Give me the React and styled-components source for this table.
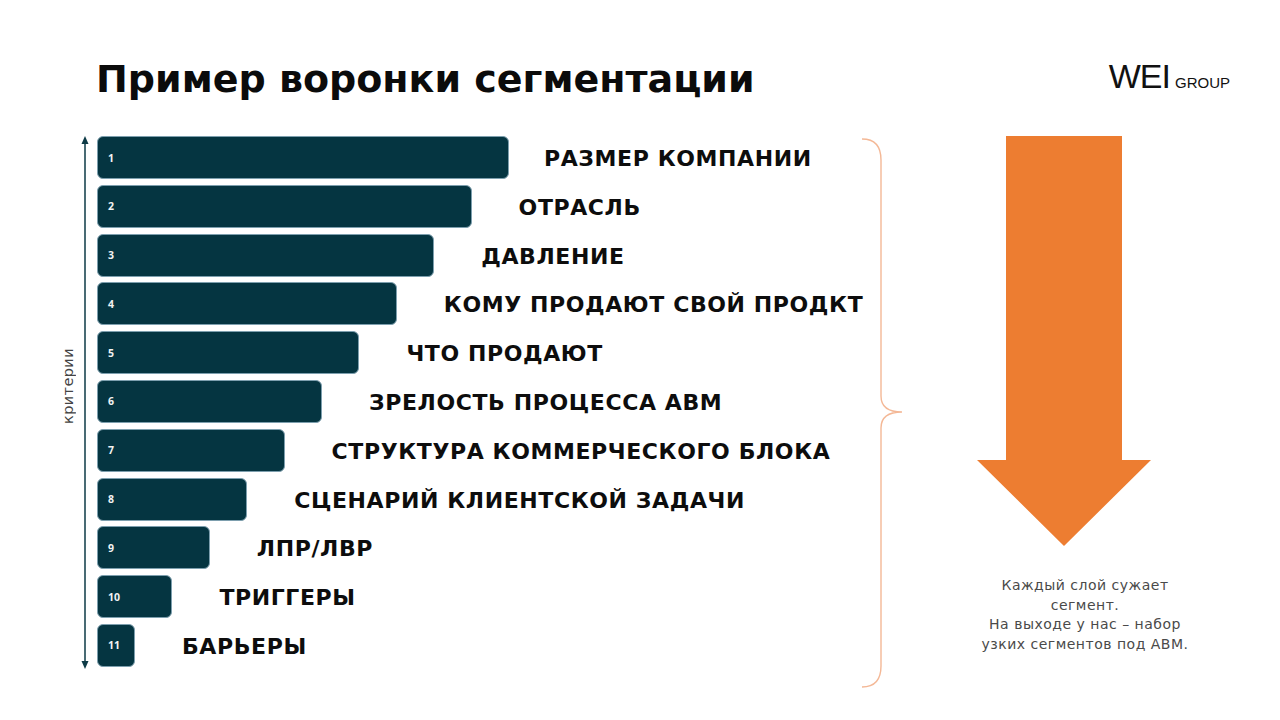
import React from "react";
import styled, { createGlobalStyle } from "styled-components";

const Global = createGlobalStyle`
  html, body { margin: 0; padding: 0; background: #fff; }
  body { font-family: "DejaVu Sans", "Open Sans", sans-serif; }
`;

const Page = styled.div`
  width: 1280px;
  height: 720px;
  background: #fff;
  overflow: hidden;
  box-sizing: border-box;
`;

const Header = styled.header`
  display: flex;
  justify-content: space-between;
  align-items: flex-start;
  padding: 55px 50px 0 96px;
  height: 136px;
  box-sizing: border-box;
`;

const Title = styled.h1`
  margin: 0;
  font-family: "DejaVu Sans", sans-serif;
  font-weight: 700;
  font-size: 38px;
  line-height: 48px;
  color: #0b0b0b;
`;

const Logo = styled.div`
  display: flex;
  align-items: baseline;
  gap: 5px;
  margin-top: 2px;
  font-family: "Liberation Sans", Arial, sans-serif;
  color: #111;
`;

const LogoMain = styled.span`
  font-size: 34px;
  letter-spacing: -1px;
`;

const LogoSub = styled.span`
  font-size: 15px;
`;

const Body = styled.main`
  display: flex;
  align-items: flex-start;
  padding-left: 60px;
`;

const AxisCol = styled.div`
  display: flex;
  align-items: center;
  gap: 4px;
  height: 533px;
  margin-right: 7px;
`;

const AxisLabel = styled.span`
  writing-mode: vertical-rl;
  transform: rotate(180deg);
  font-family: "DejaVu Sans", sans-serif;
  font-size: 14.5px;
  letter-spacing: 0.4px;
  color: #444;
  width: 16px;
  margin-top: -32px;
`;

const BarsArea = styled.div`
  width: 763px;
  display: flex;
  flex-direction: column;
  gap: 5.8px;
`;

const Row = styled.div`
  display: flex;
  align-items: center;
  height: 43px;
`;

const Bar = styled.div`
  height: 43px;
  box-sizing: border-box;
  background: #053541;
  border: 1px solid #7d9fae;
  border-radius: 6px;
  display: flex;
  align-items: center;
  padding-left: 10px;
  flex-shrink: 0;
  font-family: "Open Sans", sans-serif;
  font-weight: 700;
  font-size: 10.5px;
  color: #f2f2f2;
`;

const Label = styled.span`
  font-family: "DejaVu Sans", sans-serif;
  font-weight: 700;
  font-size: 22px;
  letter-spacing: 0.6px;
  color: #0d0d0d;
  white-space: nowrap;
  margin-left: ${(p) => p.$offset}px;
  margin-top: 2px;
`;

const Brace = styled.svg`
  margin-top: 2px;
  flex-shrink: 0;
`;

const ArrowCol = styled.div`
  display: flex;
  flex-direction: column;
  align-items: flex-start;
  margin-left: 73px;
`;

const Note = styled.p`
  margin: 30px 0 0;
  width: 216px;
  text-align: center;
  font-family: "DejaVu Sans", sans-serif;
  font-size: 14px;
  letter-spacing: 0.5px;
  line-height: 19.5px;
  color: #4a4a4a;
  white-space: nowrap;
`;

const items = [
  "РАЗМЕР КОМПАНИИ",
  "ОТРАСЛЬ",
  "ДАВЛЕНИЕ",
  "КОМУ ПРОДАЮТ СВОЙ ПРОДКТ",
  "ЧТО ПРОДАЮТ",
  "ЗРЕЛОСТЬ ПРОЦЕССА ABM",
  "СТРУКТУРА КОММЕРЧЕСКОГО БЛОКА",
  "СЦЕНАРИЙ КЛИЕНТСКОЙ ЗАДАЧИ",
  "ЛПР/ЛВР",
  "ТРИГГЕРЫ",
  "БАРЬЕРЫ",
];

export default function App() {
  return (
    <Page>
      <Global />
      <Header>
        <Title>Пример воронки сегментации</Title>
        <Logo>
          <LogoMain>WEI</LogoMain>
          <LogoSub>GROUP</LogoSub>
        </Logo>
      </Header>
      <Body>
        <AxisCol>
          <AxisLabel>критерии</AxisLabel>
          <svg width="10" height="533" viewBox="0 0 10 533">
            <line x1="5" y1="4" x2="5" y2="529" stroke="#0d3a46" strokeWidth="1.5" />
            <polygon points="5,0 1.5,8 8.5,8" fill="#0d3a46" />
            <polygon points="5,533 1.5,525 8.5,525" fill="#0d3a46" />
          </svg>
        </AxisCol>
        <BarsArea>
          {items.map((t, i) => (
            <Row key={t}>
              <Bar style={{ width: `${412 - i * 37.4}px` }}>{i + 1}</Bar>
              <Label $offset={i === 0 ? 35 : 47}>{t}</Label>
            </Row>
          ))}
        </BarsArea>
        <Brace width="44" height="552" viewBox="0 0 44 552">
          <path
            d="M2 1 C14 1 21 8 21 22 L21 258 C21 268 28 274 42 274 C28 274 21 280 21 290 L21 528 C21 542 14 549 2 549"
            fill="none"
            stroke="#f4b896"
            strokeWidth="1.4"
          />
        </Brace>
        <ArrowCol>
          <svg width="174" height="410" viewBox="0 0 174 410">
            <polygon
              points="29,0 145,0 145,324 174,324 87,410 0,324 29,324"
              fill="#ED7D31"
            />
          </svg>
          <Note>
            Каждый слой сужает
            <br />
            сегмент.
            <br />
            На выходе у нас – набор
            <br />
            узких сегментов под ABM.
          </Note>
        </ArrowCol>
      </Body>
    </Page>
  );
}
